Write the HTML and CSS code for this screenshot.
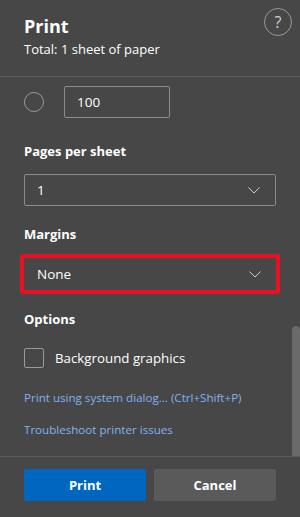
FILE: index.html
```html
<!DOCTYPE html>
<html lang="en">
<head>
  <meta charset="UTF-8" />
  <title>Print</title>
  <link rel="stylesheet" href="styles.css">
</head>
<body>
  <div class="dialog">
    <div class="header">
      <div>
        <h1>Print</h1>
        <div class="total">Total: 1 sheet of paper</div>
      </div>
      <div class="help">?</div>
    </div>

    <div class="content">
      <div class="range-row">
        <span class="radio"></span>
        <div class="num-input">100</div>
      </div>

      <div class="label first">Pages per sheet</div>
      <div class="select">
        <span>1</span>
        <svg class="chev" width="12" height="7" viewBox="0 0 12 7"><path d="M0.5 0.5 L6 6 L11.5 0.5" fill="none" stroke="#cfcfcf" stroke-width="1"/></svg>
      </div>

      <div class="label margins">Margins</div>
      <div class="select focused">
        <span>None</span>
        <svg class="chev" width="12" height="7" viewBox="0 0 12 7"><path d="M0.5 0.5 L6 6 L11.5 0.5" fill="none" stroke="#cfcfcf" stroke-width="1"/></svg>
      </div>

      <div class="label options">Options</div>
      <div class="check-row">
        <span class="checkbox"></span>
        <span>Background graphics</span>
      </div>

      <a class="link first-link" href="#">Print using system dialog... (Ctrl+Shift+P)</a>
      <a class="link" href="#">Troubleshoot printer issues</a>

      <div class="scroll-thumb"></div>
    </div>

    <div class="footer">
      <button class="btn primary">Print</button>
      <button class="btn">Cancel</button>
    </div>
  </div>
</body>
</html>
```

FILE: styles.css
```css
body {
  margin: 0;
  background: #474747;
  font-family: "Open Sans", sans-serif;
  color: #ffffff;
}
.dialog {
  width: 300px;
  height: 517px;
  display: flex;
  flex-direction: column;
}
.header {
  height: 76px;
  flex-shrink: 0;
  border-bottom: 1px solid #5e5e5e;
  display: flex;
  justify-content: space-between;
  padding: 0 8px 0 24px;
}
h1 {
  margin: 14px 0 0 0;
  font-size: 18px;
  line-height: 24px;
  font-weight: bold;
}
.total {
  margin-top: 2px;
  font-size: 13px;
  line-height: 18px;
}
.help {
  margin-top: 8px;
  width: 26px;
  height: 26px;
  border: 1px solid #9a9a9a;
  border-radius: 50%;
  display: flex;
  align-items: center;
  justify-content: center;
  font-size: 16px;
  color: #cfcfcf;
}
.content {
  position: relative;
  height: 379px;
  flex-shrink: 0;
  box-sizing: border-box;
  padding: 9px 24px 0 24px;
  font-size: 13.5px;
}
.range-row {
  display: flex;
  align-items: center;
  gap: 20px;
}
.radio {
  width: 18px;
  height: 18px;
  border: 1px solid #9a9a9a;
  border-radius: 50%;
}
.num-input {
  width: 92px;
  height: 30px;
  border: 1px solid #8c8c8c;
  border-radius: 2px;
  padding-left: 12px;
  line-height: 30px;
}
.label {
  font-weight: bold;
  font-size: 13px;
  line-height: 20px;
}
.label.first {
  margin-top: 23px;
}
.label.margins {
  margin-top: 18px;
}
.label.options {
  margin-top: 15px;
}
.select {
  margin-top: 13px;
  height: 30px;
  border: 1px solid #8c8c8c;
  border-radius: 2px;
  display: flex;
  align-items: center;
  justify-content: space-between;
  padding: 0 15px 0 12px;
}
.select.focused {
  margin: 10px -4px 0 -4px;
  height: 32px;
  border: 4px solid #e81123;
  padding: 0 15px 0 13px;
}
.chev {
  display: block;
}
.check-row {
  margin-top: 19px;
  display: flex;
  align-items: center;
  gap: 11px;
  font-size: 13.3px;
}
.checkbox {
  width: 18px;
  height: 18px;
  border: 1px solid #9a9a9a;
  border-radius: 2px;
}
.link {
  display: block;
  color: #7fb4ef;
  text-decoration: none;
  font-size: 11.6px;
  line-height: 16px;
  margin-top: 16px;
}
.link.first-link {
  margin-top: 22px;
}
.scroll-thumb {
  position: absolute;
  right: 0;
  top: 249px;
  width: 8px;
  height: 130px;
  background: #6a6a6a;
  border-radius: 4px 4px 0 0;
}
.footer {
  flex-shrink: 0;
  height: 61px;
  border-top: 1px solid #5e5e5e;
  display: flex;
  gap: 8px;
  padding: 12px 24px 0 24px;
  box-sizing: border-box;
}
.btn {
  width: 122px;
  height: 32px;
  border: none;
  border-radius: 2px;
  background: #5a5a5a;
  color: #ffffff;
  font-family: "Open Sans", sans-serif;
  font-weight: bold;
  font-size: 13px;
}
.btn.primary {
  background: #0067c0;
}
```
